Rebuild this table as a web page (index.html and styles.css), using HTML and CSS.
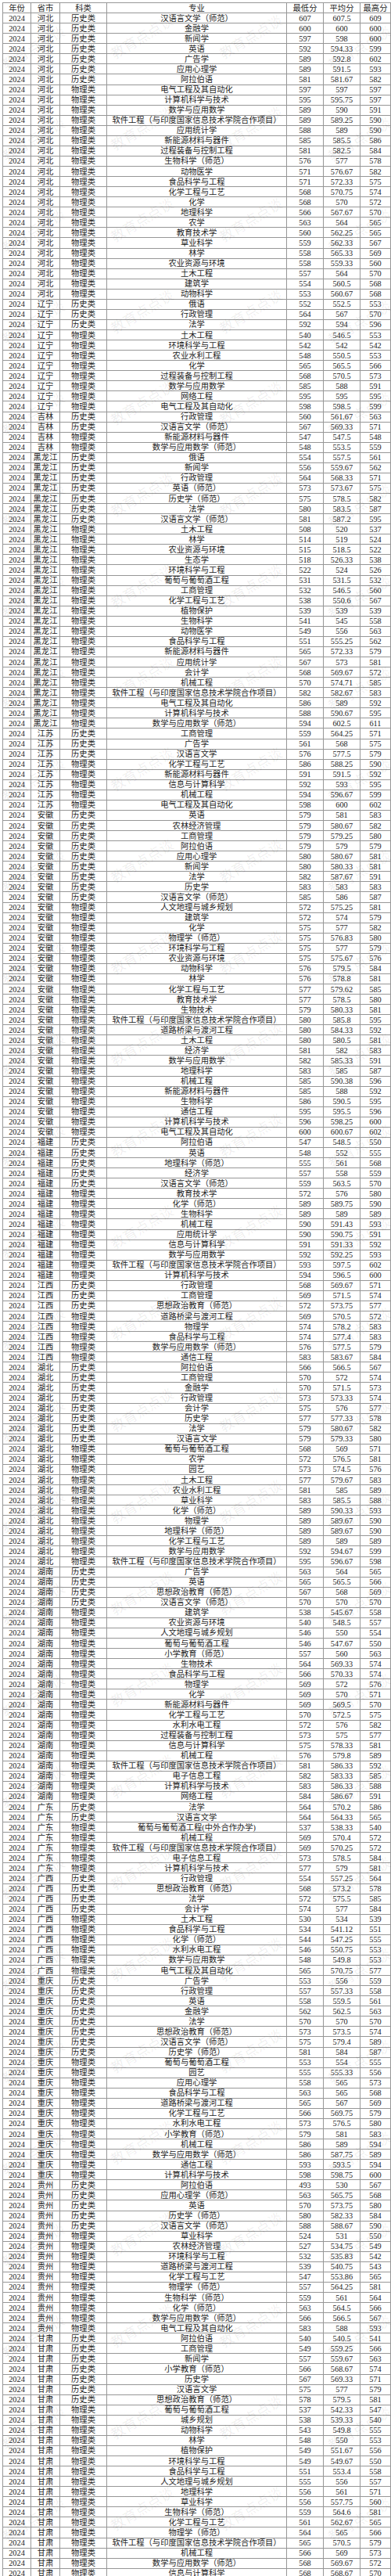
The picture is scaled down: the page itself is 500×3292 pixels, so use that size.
FILE: index.html
```html
<!DOCTYPE html>
<html lang="zh-CN">
<head>
<meta charset="utf-8">
<title>2024 分数表</title>
<link rel="stylesheet" href="styles.css">
</head>
<body>
<div class="sheet" id="sheet">
  <div class="row head"><span>年份</span><span>省市</span><span>科类</span><span>专业</span><span>最低分</span><span>平均分</span><span>最高分</span></div>
</div>
<div class="wm" id="wm" aria-hidden="true"></div>
<script src="script.js"></script>
</body>
</html>
```

FILE: styles.css
```css
html, body {
  margin: 0;
  padding: 0;
  background: #fff;
}
body {
  position: relative;
  font-family: "Liberation Serif", "Noto Sans CJK SC", serif;
  font-size: 10.3px;
  color: #232323;
  overflow: hidden;
}
.sheet {
  margin: 3px 0 0 3px;
  width: 497px;
  box-sizing: border-box;
  background: #979797;
  padding: 1px;
  display: flex;
  flex-direction: column;
  gap: 1px;
}
.row {
  display: grid;
  grid-template-columns: 35px 36px 59px 229px 46px 46px 38px;
  gap: 1px;
  height: 12.0625px;
}
.row > span {
  background: #fff;
  display: flex;
  align-items: center;
  justify-content: center;
  white-space: nowrap;
  overflow: hidden;
  line-height: 12px;
  box-sizing: border-box;
  padding-top: 1px;
}
.wm {
  position: absolute;
  inset: 0;
  pointer-events: none;
  overflow: hidden;
}
.wm span {
  position: absolute;
  width: 100px;
  margin-left: -50px;
  margin-top: -11px;
  text-align: center;
  font-family: "Noto Sans CJK SC", sans-serif;
  font-size: 18px;
  line-height: 22px;
  color: rgba(0, 0, 0, 0.07);
  transform: rotate(-31deg);
  white-space: nowrap;
}
```

FILE: script.js
```js
const SW = "软件工程（与印度国家信息技术学院合作项目）";
const DATA = `#河北 历史类
汉语言文学（师范） 607 607.5 609
金融学 600 600 600
新闻学 597 598 600
英语 592 594.33 599
广告学 589 592.8 602
应用心理学 589 591.5 593
阿拉伯语 581 581.67 582
#河北 物理类
电气工程及其自动化 597 597 597
计算机科学与技术 595 595.75 597
数学与应用数学 589 590 591
SW 589 589.25 590
应用统计学 588 589 590
新能源材料与器件 585 585.5 586
过程装备与控制工程 581 582.5 584
生物科学（师范） 576 577 578
动物医学 571 576.67 582
食品科学与工程 571 572.33 575
化学工程与工艺 568 570.75 574
化学 568 570 572
地理科学 566 567.67 570
农学 563 564 565
教育技术学 560 562.25 565
草业科学 559 562.33 567
林学 558 565.33 569
农业资源与环境 558 559.33 560
土木工程 557 564 570
建筑学 554 560.5 568
动物科学 553 560.67 568
#辽宁 历史类
俄语 552 552.5 553
行政管理 564 567 570
法学 592 594 596
#辽宁 物理类
土木工程 540 546.5 553
环境科学与工程 542 542 542
农业水利工程 548 550.5 553
化学 565 565.5 566
过程装备与控制工程 568 570.5 573
数学与应用数学 585 588 591
网络工程 595 595 595
电气工程及其自动化 598 598.5 599
#吉林 历史类
行政管理 560 561.67 563
汉语言文学（师范） 567 569.33 571
#吉林 物理类
新能源材料与器件 547 547.5 548
数学与应用数学（师范） 548 553.5 559
#黑龙江 历史类
俄语 554 557.5 561
新闻学 556 559.67 562
行政管理 564 568.33 571
英语（师范） 573 573.67 575
历史学（师范） 575 578.5 582
法学 580 583.5 587
汉语言文学（师范） 581 587.2 595
#黑龙江 物理类
土木工程 508 520 537
林学 514 519 524
农业资源与环境 515 518.5 522
生态学 518 526.33 538
环境科学与工程 522 524 526
葡萄与葡萄酒工程 531 531.5 532
工商管理 532 546.5 560
化学工程与工艺 538 550.6 567
植物保护 539 539 539
生物科学 541 545 558
动物医学 549 556 563
食品科学与工程 551 555.25 562
新能源材料与器件 565 572.33 579
应用统计学 567 573 581
会计学 568 569.67 572
机械工程 570 574.71 585
SW 582 582.67 583
电气工程及其自动化 586 589 592
计算机科学与技术 588 590.67 595
数学与应用数学（师范） 594 602.5 611
#江苏 历史类
工商管理 559 564.25 571
广告学 561 568 575
汉语言文学 576 577.5 579
#江苏 物理类
化学工程与工艺 586 588.25 590
新能源材料与器件 591 591.5 592
信息与计算科学 592 593 595
机械工程 594 596.67 599
电气工程及其自动化 598 600 602
#安徽 历史类
英语 579 581 583
农林经济管理 579 580.67 582
工商管理 579 579.25 580
阿拉伯语 579 579 579
应用心理学 580 580.67 581
新闻学 580 580.33 581
法学 582 587.67 591
历史学 583 583 583
汉语言文学（师范） 585 586 587
#安徽 物理类
人文地理与城乡规划 572 575.25 581
建筑学 572 574 579
化学 575 577 582
物理学（师范） 575 576.83 580
环境科学与工程 575 577 579
农业资源与环境 575 575.67 576
动物科学 576 579.5 584
林学 576 578.8 581
化学工程与工艺 577 579.62 585
教育技术学 577 578.5 580
生物技术 579 580.33 581
SW 580 585.8 595
道路桥梁与渡河工程 580 584.33 592
土木工程 580 580.5 581
经济学 581 582 583
数学与应用数学 582 585.33 591
地理科学 583 585 587
机械工程 585 590.38 596
新能源材料与器件 585 588 592
生物科学 586 590.5 595
通信工程 595 595.5 596
计算机科学与技术 596 598.25 600
电气工程及其自动化 600 600.67 602
#福建 历史类
阿拉伯语 547 548.5 550
英语 548 552 555
地理科学（师范） 555 561 568
经济学 557 558 559
汉语言文学（师范） 559 563.5 570
#福建 物理类
教育技术学 572 576 580
化学（师范） 589 589.75 590
生物科学 589 589 589
机械工程 590 591.43 593
应用统计学 590 590.75 591
信息与计算科学 591 591.33 592
数学与应用数学 592 592.25 593
SW 593 597.5 602
计算机科学与技术 594 596.5 600
#江西 历史类
行政管理 568 569.67 571
工商管理 569 571.5 574
思想政治教育（师范） 572 573.75 577
#江西 物理类
道路桥梁与渡河工程 569 570.5 572
物理学 574 578.2 583
食品科学与工程 574 577.4 583
数学与应用数学（师范） 576 577.5 579
通信工程 583 583.67 584
#湖北 历史类
阿拉伯语 566 566.5 567
工商管理 570 572 574
金融学 570 571.5 573
行政管理 573 573.33 574
会计学 575 576 577
历史学 577 577.33 578
法学 579 580.67 582
汉语言文学 579 579.33 580
#湖北 物理类
葡萄与葡萄酒工程 568 569 571
农学 572 576.5 581
园艺 573 574.5 576
土木工程 577 579.67 583
农业水利工程 581 585 589
草业科学 583 585.5 588
化学（师范） 589 590.33 593
物理学 589 589.67 590
地理科学（师范） 589 589.67 590
化学工程与工艺 589 589 589
数学与应用数学 592 594.67 599
SW 595 596.67 598
#湖南 历史类
广告学 563 564 565
英语 565 565.5 566
思想政治教育（师范） 567 568 569
汉语言文学（师范） 570 570 570
#湖南 物理类
建筑学 538 545.67 558
农业资源与环境 540 548.5 557
人文地理与城乡规划 546 550 554
葡萄与葡萄酒工程 546 547.67 550
小学教育（师范） 557 560 563
生物技术 564 569.33 574
食品科学与工程 566 570.33 574
物理学 569 572 576
化学 569 570 571
新能源材料与器件 569 569.5 570
化学工程与工艺 570 572.5 575
水利水电工程 572 576 582
过程装备与控制工程 573 575 577
信息与计算科学 575 578.33 581
机械工程 576 579.8 589
SW 581 586.33 592
电子信息工程 582 583.33 585
计算机科学与技术 583 586.33 588
网络工程 584 586.67 591
#广东 历史类
法学 564 570.2 586
汉语言文学 564 564.33 565
#广东 物理类
葡萄与葡萄酒工程(中外合作办学) 537 538.33 540
机械工程 569 570.4 572
SW 569 570.25 572
电子信息工程 573 578.5 584
计算机科学与技术 577 579 581
#广西 历史类
行政管理 554 557.25 564
思想政治教育（师范） 568 573.2 578
法学 572 575.5 585
会计学 574 577 584
#广西 物理类
土木工程 530 534 539
食品科学与工程 534 541.12 551
化学（师范） 544 547.25 555
水利水电工程 546 550.75 553
数学与应用数学 548 549.8 553
电气工程及其自动化 565 570.75 577
#重庆 历史类
广告学 553 556 559
行政管理 557 557.33 558
英语 558 559.5 561
金融学 562 562.5 563
法学 570 570 570
思想政治教育（师范） 573 573.5 574
汉语言文学（师范） 575 579.4 589
历史学（师范） 581 584 587
#重庆 物理类
葡萄与葡萄酒工程 553 554 555
园艺 555 555.33 556
应用心理学 558 565 573
食品科学与工程 563 565 568
道路桥梁与渡河工程 565 567 569
化学工程与工艺 566 569.75 579
水利水电工程 573 576.5 580
小学教育（师范） 579 581 583
机械工程 586 589 594
数学与应用数学（师范） 586 587.75 589
通信工程 593 593.5 594
计算机科学与技术 598 598.75 600
#贵州 历史类
阿拉伯语 493 530 567
应用心理学（师范） 563 565.75 568
英语 570 573.75 580
历史学（师范） 580 582.33 584
汉语言文学（师范） 588 588.67 590
#贵州 物理类
草业科学 524 531 550
农林经济管理 527 534.75 549
环境科学与工程 532 535.83 542
道路桥梁与渡河工程 539 540.75 543
化学工程与工艺 547 553.86 565
物理学（师范） 557 564.25 581
生物科学（师范） 559 561 564
化学（师范） 563 564.5 566
数学与应用数学（师范） 566 566.5 567
电气工程及其自动化 583 588 593
#甘肃 历史类
阿拉伯语 540 540.5 541
工商管理 549 559.25 566
新闻学 557 559.67 563
小学教育（师范） 566 568.67 574
历史学 567 569.33 571
汉语言文学 575 577 579
思想政治教育（师范） 578 579.5 581
#甘肃 物理类
葡萄与葡萄酒工程 537 542.33 547
城乡规划 538 539.33 540
动物科学 543 549.8 555
林学 548 550 553
植物保护 549 551.67 556
环境科学与工程 549 549.67 550
食品科学与工程 551 553.4 558
人文地理与城乡规划 555 556 557
地理科学 556 561 571
草业科学 556 557.75 560
生物科学（师范） 559 564.6 581
化学工程与工艺 561 562.67 565
物理学（师范） 564 565 566
SW 565 570.5 579
机械工程 566 569 573
数学与应用数学（师范） 568 569.67 572
信息与计算科学 568 568.67 570`;

(function () {
  const sheet = document.getElementById("sheet");
  const frag = document.createDocumentFragment();
  let prov = "", kind = "";
  DATA.split("\n").forEach(function (line) {
    line = line.trim();
    if (!line) return;
    if (line[0] === "#") {
      const p = line.slice(1).split(" ");
      prov = p[0]; kind = p[1];
      return;
    }
    const f = line.split(" ");
    const major = f[0] === "SW" ? SW : f[0];
    const row = document.createElement("div");
    row.className = "row";
    ["2024", prov, kind, major, f[1], f[2], f[3]].forEach(function (t) {
      const s = document.createElement("span");
      s.textContent = t;
      row.appendChild(s);
    });
    frag.appendChild(row);
  });
  sheet.appendChild(frag);

  // faint diagonal watermark tiles
  const wm = document.getElementById("wm");
  const wf = document.createDocumentFragment();
  const xs = [42, 181, 320, 459];
  for (let y = 46; y < 3330; y += 117) {
    xs.forEach(function (x, i) {
      const s = document.createElement("span");
      s.textContent = "教育点点谈";
      s.style.left = x + "px";
      s.style.top = (y + (i === 0 || i === 3 ? 14 : 0)) + "px";
      wf.appendChild(s);
    });
  }
  wm.appendChild(wf);
})();
```
